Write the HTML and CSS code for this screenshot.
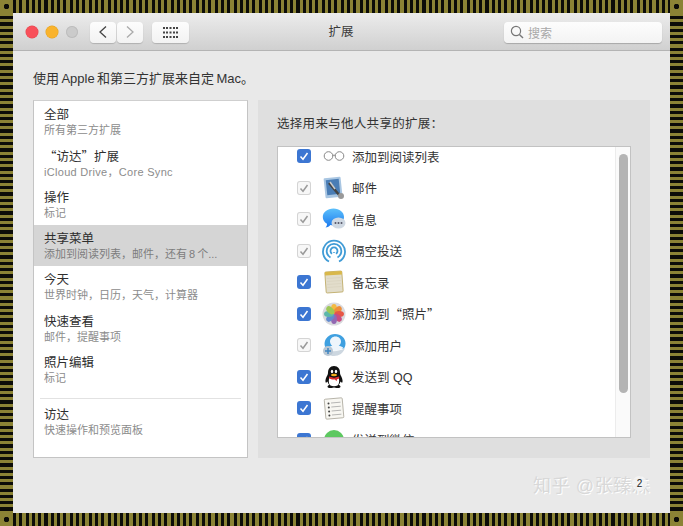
FILE: index.html
```html
<!DOCTYPE html>
<html lang="zh-CN">
<head>
<meta charset="utf-8">
<title>扩展</title>
<link rel="stylesheet" href="styles.css">
</head>
<body>
<div class="frame">
  <div class="corner"></div><div class="band-h"></div><div class="corner"></div>
  <div class="band-v"></div>
  <main class="window">
    <header class="titlebar">
      <div class="lights">
        <span class="light red"></span><span class="light yellow"></span><span class="light grey"></span>
      </div>
      <div class="nav">
        <button class="btn btn-nav"><svg width="10" height="14" viewBox="0 0 10 14"><path d="M8 1.5 2 7l6 5.5" fill="none" stroke="#444" stroke-width="1.3"/></svg></button>
        <button class="btn btn-nav"><svg width="10" height="14" viewBox="0 0 10 14"><path d="M2 1.5 8 7l-6 5.5" fill="none" stroke="#aaa" stroke-width="1.3"/></svg></button>
      </div>
      <button class="btn btn-grid"><svg width="15" height="11" viewBox="0 0 15 11" fill="#444"><rect x="0" y="0" width="2" height="2"/><rect x="3" y="0" width="2" height="2"/><rect x="6.500" y="0" width="2" height="2"/><rect x="10" y="0" width="2" height="2"/><rect x="13" y="0" width="2" height="2"/><rect x="0" y="4.500" width="2" height="2"/><rect x="3" y="4.500" width="2" height="2"/><rect x="6.500" y="4.500" width="2" height="2"/><rect x="10" y="4.500" width="2" height="2"/><rect x="13" y="4.500" width="2" height="2"/><rect x="0" y="9" width="2" height="2"/><rect x="3" y="9" width="2" height="2"/><rect x="6.500" y="9" width="2" height="2"/><rect x="10" y="9" width="2" height="2"/><rect x="13" y="9" width="2" height="2"/></svg></button>
      <h1 class="title">扩展</h1>
      <div class="search">
        <svg width="14" height="14" viewBox="0 0 14 14"><circle cx="6" cy="6" r="4.600" fill="none" stroke="#777" stroke-width="1.200"/><path d="m9.400 9.400 3.600 3.600" stroke="#777" stroke-width="1.400"/></svg>
        <span>搜索</span>
      </div>
    </header>
    <div class="content">
      <p class="intro">使用 Apple 和第三方扩展来自定 Mac。</p>
      <div class="columns">
        <nav class="sidebar">
          <div class="item"><b>全部</b><small>所有第三方扩展</small></div>
          <div class="item"><b><span class="q">“</span>访达<span class="q">”</span>扩展</b><small class="latin">iCloud Drive，Core Sync</small></div>
          <div class="item"><b>操作</b><small>标记</small></div>
          <div class="item active"><b>共享菜单</b><small class="tight">添加到阅读列表，邮件，还有 8 个...</small></div>
          <div class="item"><b>今天</b><small>世界时钟，日历，天气，计算器</small></div>
          <div class="item"><b>快速查看</b><small>邮件，提醒事项</small></div>
          <div class="item"><b>照片编辑</b><small>标记</small></div>
          <hr class="divider">
          <div class="item"><b>访达</b><small>快速操作和预览面板</small></div>
        </nav>
        <section class="panel">
          <h2 class="panel-title">选择用来与他人共享的扩展：</h2>
          <div class="list">
            <div class="rows">
              <div class="row"><span class="check on"><svg viewBox="0 0 14 14"><path d="m3.500 7.500 2.500 2.700 4.500-6.200"/></svg></span>
                <svg class="ico" viewBox="0 0 24 24"><circle cx="6.500" cy="12" r="4.300" fill="none" stroke="#888"/><circle cx="17.500" cy="12" r="4.300" fill="none" stroke="#888"/><path d="M10.800 11.500q1.200-1 2.400 0" fill="none" stroke="#888"/></svg>
                <span>添加到阅读列表</span></div>
              <div class="row"><span class="check off"><svg viewBox="0 0 14 14"><path d="m3.500 7.500 2.500 2.700 4.500-6.200"/></svg></span>
                <svg class="ico" viewBox="0 0 24 24"><rect x="2.500" y="1.500" width="17" height="20" rx="1" fill="#a9c6e2" transform="rotate(-6 11 11)"/><rect x="4.500" y="3.500" width="13" height="15" fill="#4a7db5" transform="rotate(-6 11 11)"/><path d="M7 7l11 13" stroke="#444" stroke-width="2.500"/><path d="M8 6l5 7" stroke="#ccc" stroke-width="1.500"/><circle cx="19" cy="20" r="3" fill="#999"/></svg>
                <span>邮件</span></div>
              <div class="row"><span class="check off"><svg viewBox="0 0 14 14"><path d="m3.500 7.500 2.500 2.700 4.500-6.200"/></svg></span>
                <svg class="ico" viewBox="0 0 24 24"><defs><linearGradient id="msg" x1="0" y1="0" x2="0" y2="1"><stop offset="0" stop-color="#5cc0fb"/><stop offset="1" stop-color="#1a78ee"/></linearGradient></defs><path d="M11.500 1.500c6 0 10.500 3.600 10.500 8.500s-4.500 8.500-10.500 8.500c-1 0-2.200-.1-3.200-.4-1 1.500-2.800 2.300-4.800 2.400 1.100-1.200 1.600-2.400 1.500-3.800C2.200 15.200.8 12.800.8 10c0-4.900 4.700-8.500 10.700-8.500z" fill="url(#msg)"/><ellipse cx="16.500" cy="16" rx="7" ry="5.500" fill="#cfd8e2"/><g fill="#556"><circle cx="13.500" cy="16" r="1"/><circle cx="16.500" cy="16" r="1"/><circle cx="19.500" cy="16" r="1"/></g></svg>
                <span>信息</span></div>
              <div class="row"><span class="check off"><svg viewBox="0 0 14 14"><path d="m3.500 7.500 2.500 2.700 4.500-6.200"/></svg></span>
                <svg class="ico" viewBox="0 0 24 24" fill="none" stroke="#3f9bd6"><path d="M7 22.500A11 11 0 1 1 17 22.500" stroke-width="1.800"/><path d="M8.500 18.500a7.300 7.300 0 1 1 7 0" stroke-width="1.800"/><path d="M10 14.800a3.500 3.500 0 1 1 4 0" stroke-width="1.800"/><path d="M12 13v1" stroke-width="1.500"/></svg>
                <span>隔空投送</span></div>
              <div class="row"><span class="check on"><svg viewBox="0 0 14 14"><path d="m3.500 7.500 2.500 2.700 4.500-6.200"/></svg></span>
                <svg class="ico" viewBox="0 0 24 24"><g transform="rotate(-4 12 12)"><rect x="3.500" y="1.500" width="17" height="21" rx="1" fill="#e2ddcb" stroke="#bba65e" stroke-width=".8"/><rect x="3.500" y="1.500" width="17" height="3.500" fill="#d9b84a"/><path d="M5 8h14M5 11h14M5 14h14M5 17h14" stroke="#d6d0ba" stroke-width=".6"/></g></svg>
                <span>备忘录</span></div>
              <div class="row"><span class="check on"><svg viewBox="0 0 14 14"><path d="m3.500 7.500 2.500 2.700 4.500-6.200"/></svg></span>
                <svg class="ico" viewBox="0 0 24 24"><circle cx="12" cy="12" r="11.500" fill="#d9dade"/><g opacity=".95"><ellipse cx="12" cy="6.800" rx="3" ry="4.800" fill="#f5b83a"/><ellipse cx="12" cy="6.800" rx="3" ry="4.800" fill="#f08a32" transform="rotate(45 12 12)"/><ellipse cx="12" cy="6.800" rx="3" ry="4.800" fill="#e8503f" transform="rotate(90 12 12)"/><ellipse cx="12" cy="6.800" rx="3" ry="4.800" fill="#c9457e" transform="rotate(135 12 12)"/><ellipse cx="12" cy="6.800" rx="3" ry="4.800" fill="#8f62b0" transform="rotate(180 12 12)"/><ellipse cx="12" cy="6.800" rx="3" ry="4.800" fill="#5b87cf" transform="rotate(225 12 12)"/><ellipse cx="12" cy="6.800" rx="3" ry="4.800" fill="#56b6a8" transform="rotate(270 12 12)"/><ellipse cx="12" cy="6.800" rx="3" ry="4.800" fill="#9ac84e" transform="rotate(315 12 12)"/></g></svg>
                <span>添加到<span class="q">“</span>照片<span class="q">”</span></span></div>
              <div class="row"><span class="check off"><svg viewBox="0 0 14 14"><path d="m3.500 7.500 2.500 2.700 4.500-6.200"/></svg></span>
                <svg class="ico" viewBox="0 0 24 24"><path d="M13 1c6 0 10.500 4 10.500 9.500 0 2-.6 3.500-1.500 5H4C3 14 2.500 12.500 2.500 11 2.500 5.500 7 1 13 1z" fill="#3fa0e0"/><path d="M13.500 3.500c3.200 0 5.500 2.300 5.500 5 0 1.800-1 3.300-2.300 4.300 1.800.4 3.400 1 4.600 2-2 2-5 3-8 3s-5.500-1-7.300-3c1.100-1 2.600-1.600 4.300-2-1.300-1-2.300-2.500-2.300-4.300 0-2.700 2.300-5 5.500-5z" fill="#eef5fb"/><path d="M3 16c5 3 14 3 20-1-1.500 5-6 8-11 8-4.500 0-8-2.500-9-7z" fill="#cdd7e0"/><circle cx="6" cy="18" r="5" fill="#b9c7d4"/><path d="M6 15v6M3 18h6" stroke="#3f85c0" stroke-width="1.500"/></svg>
                <span>添加用户</span></div>
              <div class="row"><span class="check on"><svg viewBox="0 0 14 14"><path d="m3.500 7.500 2.500 2.700 4.500-6.200"/></svg></span>
                <svg class="ico" viewBox="0 0 24 24"><path d="M12 1c-4 0-6 3-6 6.500 0 1-.1 1.500-.5 2.500-1 2-2.500 4.500-2 7 .3 1 1 .8 2-.5.5 1.500 1 2.500 2 3.300-1.500.6-2 1.200-2 2 0 1 2 1.500 4 1.200 1-.1 1.500-.5 2.500-.5s1.500.4 2.500.5c2 .3 4-.2 4-1.200 0-.8-.5-1.400-2-2 1-.8 1.500-1.800 2-3.300 1 1.300 1.700 1.500 2 .5.500-2.500-1-5-2-7-.4-1-.5-1.500-.5-2.500C18 4 16 1 12 1z" fill="#111"/><path d="M7.500 12c2.500 1.500 6.500 1.500 9 0 1 3 1 7-1 8.500-2 1-5 1-7 0-2-1.500-2-5.500-1-8.500z" fill="#fff"/><path d="M7 11.500c3 1.500 7 1.500 10 0l.3 1.700c-1 .8-1.800 1-2.300 1.100l-.5 2-1.500-1.800c-2.500.2-4.500-.3-6-1.300z" fill="#d8282a"/><ellipse cx="12" cy="10" rx="3" ry="1.300" fill="#f2b01e"/><ellipse cx="10" cy="6.500" rx="1.200" ry="1.700" fill="#fff"/><ellipse cx="14" cy="6.500" rx="1.200" ry="1.700" fill="#fff"/></svg>
                <span>发送到 QQ</span></div>
              <div class="row"><span class="check on"><svg viewBox="0 0 14 14"><path d="m3.500 7.500 2.500 2.700 4.500-6.200"/></svg></span>
                <svg class="ico" viewBox="0 0 24 24"><rect x="3" y="2.500" width="18" height="20" rx="1" fill="#f8f7f2" stroke="#a9a59a" stroke-width=".8" transform="rotate(-5 12 12)"/><g fill="#444"><circle cx="6.500" cy="7.500" r="1"/><circle cx="6.800" cy="11.500" r="1"/><circle cx="7.100" cy="15.500" r="1"/><circle cx="7.400" cy="19.500" r="1"/></g><path d="M9 7l9.500-.8M9.300 11l9.500-.8M9.600 15l9.500-.8M9.900 19l9.500-.8" stroke="#999" stroke-width=".7"/></svg>
                <span>提醒事项</span></div>
              <div class="row"><span class="check on"><svg viewBox="0 0 14 14"><path d="m3.500 7.500 2.500 2.700 4.500-6.200"/></svg></span>
                <svg class="ico" viewBox="0 0 24 24"><circle cx="12" cy="12" r="10" fill="#5dc860"/></svg>
                <span>发送到微信</span></div>
            </div>
            <div class="scrolltrack"><div class="thumb"></div></div>
          </div>
        </section>
      </div>
      <div class="watermark">知乎 @张臻森<span class="badge">2</span></div>
    </div>
  </main>
  <div class="band-v"></div>
  <div class="corner"></div><div class="band-h"></div><div class="corner"></div>
</div>
</body>
</html>
```

FILE: styles.css
```css
* { box-sizing: border-box; }
html, body { margin: 0; padding: 0; }
body {
  width: 683px;
  height: 526px;
  overflow: hidden;
  font-family: "Liberation Sans", "Noto Sans CJK SC", sans-serif;
  color: #333;
  background: #8b8335;
}
.q { font-family: "Noto Sans CJK SC", sans-serif; }

.frame {
  display: grid;
  grid-template-columns: 13px 657px 13px;
  grid-template-rows: 13px 500px 13px;
}
.band-h { background: repeating-linear-gradient(90deg, #0c0c08 0 3px, #8b8335 3px 6.3px); }
.band-v { background: repeating-linear-gradient(180deg, #8b8335 0 3px, #0c0c08 3px 6.300px); }
.corner {
  background: #8b8335 radial-gradient(circle at center, #0c0c08 0 2.500px, transparent 3px);
}

.window {
  background: #e9e9e9;
  display: flex;
  flex-direction: column;
  overflow: hidden;
}

.titlebar {
  height: 38px;
  flex: none;
  display: flex;
  align-items: center;
  position: relative;
  padding: 1px 8px 0 13px;
  background: linear-gradient(#ececec, #d0d0d0);
  border-bottom: 1px solid #b4b4b4;
}
.lights { display: flex; gap: 8px; width: 64px; flex: none; }
.light { width: 12px; height: 12px; border-radius: 50%; }
.red { background: #f8505a; box-shadow: 0 0 0 .5px #e04a50; }
.yellow { background: #f9b32d; box-shadow: 0 0 0 .5px #e2a020; }
.grey { background: #cbcbcb; box-shadow: inset 0 0 0 1px #bdbdbd; }

.btn {
  height: 21px;
  padding: 0;
  border: 0;
  border-radius: 4px;
  background: linear-gradient(#fdfdfd, #f2f2f2);
  box-shadow: 0 1px 1px #b0b0b0;
  display: flex;
  align-items: center;
  justify-content: center;
}
.nav { display: flex; gap: 1px; flex: none; }
.btn-nav { width: 26px; }
.btn-grid { width: 37px; margin-left: 9px; flex: none; }

.title {
  position: absolute;
  left: 0;
  right: 1px;
  top: 10px;
  margin: 0;
  text-align: center;
  font-size: 12.500px;
  line-height: 18px;
  font-weight: 400;
  color: #3a3a3a;
}

.search {
  margin-left: auto;
  width: 158px;
  height: 21px;
  display: flex;
  align-items: center;
  gap: 4px;
  padding-left: 6px;
  font-size: 12px;
  color: #a8a8a8;
  border-radius: 4px;
  background: linear-gradient(#fdfdfd, #f3f3f3);
  box-shadow: 0 1px 1px #a8a8a8;
}

.content {
  flex: 1;
  position: relative;
  padding: 19px 20px 0;
}
.intro {
  margin: 0;
  font-size: 13px;
  line-height: 18px;
  word-spacing: -1.200px;
  color: #333;
}
.columns {
  display: flex;
  gap: 10px;
  margin-top: 12px;
  height: 358px;
}

.sidebar {
  width: 215px;
  flex: none;
  background: #fff;
  border: 1px solid #c4c4c4;
  border-top-color: #cfcfcf;
}
.item {
  height: 41.300px;
  padding: 2px 10px 0;
  display: flex;
  flex-direction: column;
  justify-content: center;
}
.item b {
  font-weight: 400;
  font-size: 12.500px;
  line-height: 15px;
  color: #2e2e2e;
}
.item small {
  font-size: 11px;
  line-height: 14px;
  color: #8c8c8c;
  white-space: nowrap;
}
.item .latin { letter-spacing: .3px; }
.item .tight { word-spacing: -1px; }
.active { background: #d5d5d5; }
.active small { color: #7d7d7d; }
.divider {
  border: 0;
  height: 1px;
  background: #e2e2e2;
  margin: 8px 6px 2px;
}

.panel {
  flex: 1;
  background: #dfdfdf;
  padding: 15px 19px 20px;
  display: flex;
  flex-direction: column;
}
.panel-title {
  margin: 0 0 13px;
  font-size: 12.500px;
  line-height: 18px;
  letter-spacing: .3px;
  font-weight: 400;
  color: #333;
}
.list {
  position: relative;
  height: 292px;
  background: #fff;
  border: 1px solid #c2c2c2;
  overflow: hidden;
}
.rows { margin-top: -6.300px; }
.row {
  height: 31.500px;
  display: flex;
  align-items: center;
  padding-left: 19px;
  font-size: 12.500px;
  color: #333;
}
.check {
  width: 14px;
  height: 14px;
  border-radius: 3px;
  flex: none;
  display: flex;
}
.check svg { width: 14px; height: 14px; fill: none; stroke-width: 1.500; }
.check.on { background: #3c76d2; }
.check.on svg { stroke: #fff; }
.check.off { background: #f7f7f7; box-shadow: inset 0 0 0 1px #d4d4d4; }
.check.off svg { stroke: #9a9a9a; }
.ico { width: 24px; height: 24px; flex: none; margin: 0 6px 0 11px; }

.scrolltrack {
  position: absolute;
  top: 0;
  right: 0;
  bottom: 0;
  width: 15px;
  background: #fafafa;
  border-left: 1px solid #ececec;
  padding: 7px 2px 0 3px;
}
.thumb {
  height: 239px;
  border-radius: 5px;
  background: #b4b4b4;
}

.watermark {
  position: absolute;
  left: 520px;
  top: 423px;
  font-size: 18px;
  line-height: 24px;
  letter-spacing: .6px;
  white-space: nowrap;
  color: #d8d8d8;
  text-shadow: 1px 1px 0 #fff;
}
.badge {
  position: absolute;
  left: 99px;
  top: 2px;
  width: 15px;
  height: 15px;
  border-radius: 50%;
  background: rgba(245, 245, 245, .8);
  color: #222;
  font-size: 10px;
  line-height: 15px;
  text-align: center;
  text-shadow: none;
  letter-spacing: 0;
}
```
